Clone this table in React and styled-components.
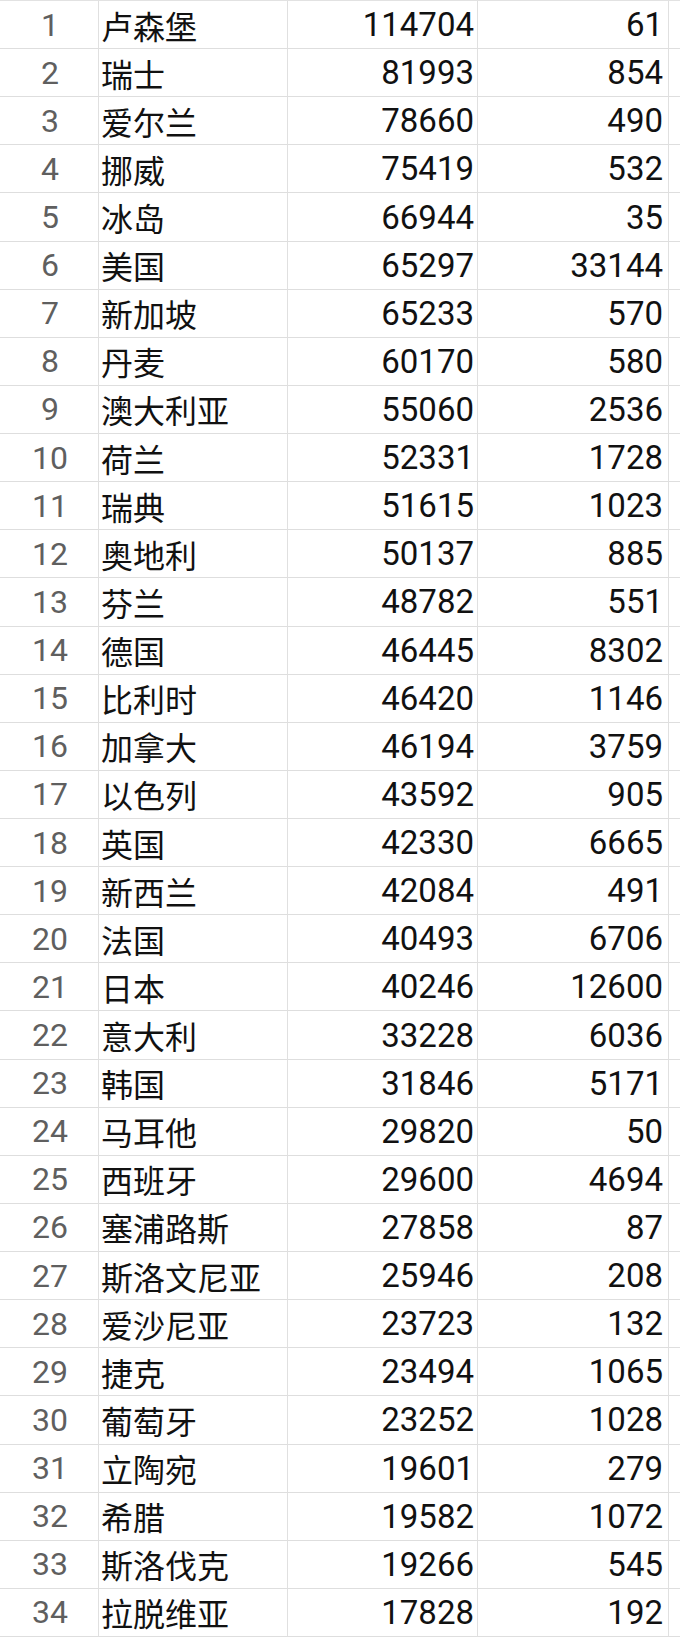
import styled, { createGlobalStyle } from "styled-components";

const GlobalStyle = createGlobalStyle`
  html, body {
    margin: 0;
    padding: 0;
    background: #ffffff;
  }
`;

const rows = [
  ["卢森堡", 114704, 61],
  ["瑞士", 81993, 854],
  ["爱尔兰", 78660, 490],
  ["挪威", 75419, 532],
  ["冰岛", 66944, 35],
  ["美国", 65297, 33144],
  ["新加坡", 65233, 570],
  ["丹麦", 60170, 580],
  ["澳大利亚", 55060, 2536],
  ["荷兰", 52331, 1728],
  ["瑞典", 51615, 1023],
  ["奥地利", 50137, 885],
  ["芬兰", 48782, 551],
  ["德国", 46445, 8302],
  ["比利时", 46420, 1146],
  ["加拿大", 46194, 3759],
  ["以色列", 43592, 905],
  ["英国", 42330, 6665],
  ["新西兰", 42084, 491],
  ["法国", 40493, 6706],
  ["日本", 40246, 12600],
  ["意大利", 33228, 6036],
  ["韩国", 31846, 5171],
  ["马耳他", 29820, 50],
  ["西班牙", 29600, 4694],
  ["塞浦路斯", 27858, 87],
  ["斯洛文尼亚", 25946, 208],
  ["爱沙尼亚", 23723, 132],
  ["捷克", 23494, 1065],
  ["葡萄牙", 23252, 1028],
  ["立陶宛", 19601, 279],
  ["希腊", 19582, 1072],
  ["斯洛伐克", 19266, 545],
  ["拉脱维亚", 17828, 192],
];

const Sheet = styled.div`
  box-sizing: border-box;
  width: 680px;
  height: 1637px;
  display: grid;
  grid-template-columns: 99px 189px 190px 191px 11px;
  grid-template-rows: repeat(34, 1fr);
  border-top: 1px solid #e2e2e2;
  overflow: hidden;
`;

const Cell = styled.div`
  box-sizing: border-box;
  display: flex;
  align-items: center;
  justify-content: ${(p) =>
    p.$align === "right" ? "flex-end" : p.$align === "center" ? "center" : "flex-start"};
  padding: ${(p) => p.$pad || "0"};
  border-bottom: 1px solid #dedede;
  border-right: 1px solid #e0e0e0;
  color: #111111;
  font-family: Roboto, "Noto Sans CJK SC", sans-serif;
  font-size: 33px;
  line-height: 1;
  white-space: nowrap;
  overflow: hidden;
`;

const IndexCell = styled(Cell)`
  color: #5f5f5f;
  font-size: 32px;
  padding-left: 2px;
`;

const NameCell = styled(Cell)`
  font-family: "Noto Sans CJK SC", sans-serif;
  font-size: 32px;
  padding-left: 2px;
`;

const EdgeCell = styled(Cell)`
  border-right: none;
`;

const App = () => {
  return (
    <>
      <GlobalStyle />
      <Sheet>
        {rows.map(([name, gdp, total], i) => (
          <Row key={name} index={i + 1} name={name} gdp={gdp} total={total} />
        ))}
      </Sheet>
    </>
  );
};

const Row = ({ index, name, gdp, total }) => (
  <>
    <IndexCell $align="center">{index}</IndexCell>
    <NameCell>{name}</NameCell>
    <Cell $align="right" $pad="0 3px 0 0">{gdp}</Cell>
    <Cell $align="right" $pad="0 5px 0 0">{total}</Cell>
    <EdgeCell />
  </>
);

export default App;
